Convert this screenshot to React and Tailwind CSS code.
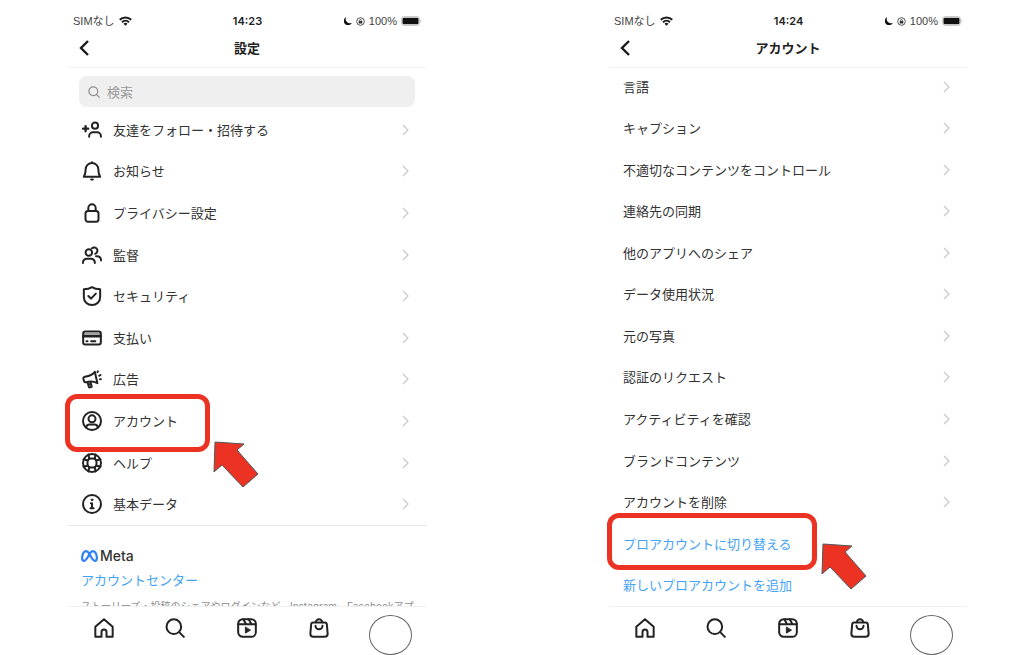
const settings = [
  { label: "友達をフォロー・招待する", icon: AddUserIcon },
  { label: "お知らせ", icon: BellIcon },
  { label: "プライバシー設定", icon: LockIcon },
  { label: "監督", icon: UsersIcon },
  { label: "セキュリティ", icon: ShieldIcon },
  { label: "支払い", icon: CardIcon },
  { label: "広告", icon: MegaphoneIcon },
  { label: "アカウント", icon: UserCircleIcon, marked: true },
  { label: "ヘルプ", icon: LifebuoyIcon },
  { label: "基本データ", icon: InfoIcon },
];

const accountItems = [
  { label: "言語" },
  { label: "キャプション" },
  { label: "不適切なコンテンツをコントロール" },
  { label: "連絡先の同期" },
  { label: "他のアプリへのシェア" },
  { label: "データ使用状況" },
  { label: "元の写真" },
  { label: "認証のリクエスト" },
  { label: "アクティビティを確認" },
  { label: "ブランドコンテンツ" },
  { label: "アカウントを削除" },
  { label: "プロアカウントに切り替える", link: true, marked: true },
  { label: "新しいプロアカウントを追加", link: true },
];

// shared wrapper for the line icons
function Icon({ children, className = "size-5" }) {
  return (
    <svg
      viewBox="0 0 24 24"
      fill="none"
      stroke="currentColor"
      strokeWidth="2.4"
      strokeLinecap="round"
      strokeLinejoin="round"
      className={`shrink-0 ${className}`}
      aria-hidden="true"
    >
      {children}
    </svg>
  );
}

function AddUserIcon() {
  return (
    <Icon>
      <path d="M1.2 10.4h6.200M4.300 7.300v6.200" strokeWidth="2.800" />
      <circle cx="15.600" cy="6.800" r="3.700" />
      <path d="M8.600 20v-.6a4.600 4.600 0 0 1 4.600-4.600h4.900a4.600 4.600 0 0 1 4.600 4.600v.6" />
    </Icon>
  );
}

function BellIcon() {
  return (
    <Icon>
      <path d="M12 2.400a7.600 7.600 0 0 0-7.600 7.600c0 4-.3 6-2.200 9h19.600c-1.900-3-2.200-5-2.200-9A7.600 7.600 0 0 0 12 2.400z" />
      <path d="M11 22.200h2M12 1.400v1" />
    </Icon>
  );
}

function LockIcon() {
  return (
    <Icon>
      <rect x="4.200" y="9.600" width="15.600" height="13" rx="3" />
      <path d="M7.600 9.600V6a4.400 4.400 0 0 1 8.800 0v3.600" />
    </Icon>
  );
}

function UsersIcon() {
  return (
    <Icon>
      <circle cx="8.200" cy="9" r="3.900" />
      <path d="M1.200 21.600V21a4.600 4.600 0 0 1 4.600-4.600h5a4.600 4.600 0 0 1 4.600 4.600v.6" />
      <path d="M12 4a3.900 3.900 0 1 1 3.800 6.600" />
      <path d="M16.800 13.400h1.400a4.600 4.600 0 0 1 4.600 4.600v.6" />
    </Icon>
  );
}

function ShieldIcon() {
  return (
    <Icon>
      <path d="M12 1.400c3 2 6 2.600 9.800 2.600v9.200c0 5.400-4.200 9.600-9.800 9.600s-9.800-4.200-9.800-9.600V4C6 4 9 3.400 12 1.400z" />
      <path d="M7.600 12l3.200 3.200 5.800-6" />
    </Icon>
  );
}

function CardIcon() {
  return (
    <Icon>
      <rect x="1.400" y="4.200" width="21.200" height="15.600" rx="2.600" />
      <path d="M1.400 10h21.200" strokeWidth="3" />
      <path d="M1.400 7.200h21.200" strokeWidth="1" />
      <path d="M5.400 15.800h1.200M11 15.800h5" />
    </Icon>
  );
}

function MegaphoneIcon() {
  return (
    <Icon>
      <path d="M15.400 3.400C12.400 7.600 8 8.400 3.200 9.400a2 2 0 0 0-1.500 2.500l.8 2.700a2 2 0 0 0 2.400 1.300c4.600-1.200 9-1.200 13.600 1.100z" />
      <path d="M6.600 16l1.600 5.400a1 1 0 0 0 1.300.7l2.200-.7-1.500-5.400M8.400 18.600l2-.6" />
      <path d="M18.600 3.800l.5-1M20.800 8l1.400-.8M21.600 12.200l1 .2" />
    </Icon>
  );
}

function UserCircleIcon() {
  return (
    <Icon>
      <circle cx="12" cy="12" r="10.800" />
      <circle cx="12" cy="9.400" r="4.200" />
      <path d="M5 19.800v-.2a4 4 0 0 1 4-3.400h6a4 4 0 0 1 4 3.400v.2" />
    </Icon>
  );
}

function LifebuoyIcon() {
  return (
    <Icon>
      <circle cx="12" cy="12" r="10.800" />
      <rect x="6.600" y="6.600" width="10.800" height="10.800" rx="4.200" />
      <path d="M7.800 1.800L8.600 7M16.200 1.800L15.400 7M7.800 22.200L8.600 17M16.200 22.200L15.400 17M1.800 7.800L7 8.600M1.800 16.200L7 15.400M22.200 7.800L17 8.600M22.200 16.200L17 15.400" />
    </Icon>
  );
}

function InfoIcon() {
  return (
    <Icon>
      <circle cx="12" cy="12" r="10.800" />
      <circle cx="12" cy="7" r="1.100" fill="currentColor" strokeWidth="1" />
      <path d="M10.600 11H12v6M10.200 17.200h3.800" />
    </Icon>
  );
}

function HomeIcon() {
  return (
    <Icon>
      <path d="M9 22.400v-5.600a3 3 0 0 1 6 0v5.600h7.400V10.600L12 1.600l-10.400 9v11.800z" />
    </Icon>
  );
}

function SearchIcon({ className }) {
  return (
    <Icon className={className}>
      <circle cx="10.600" cy="10.400" r="8.800" />
      <path d="M17 17l5.600 5.600" />
    </Icon>
  );
}

function ReelsIcon() {
  return (
    <Icon>
      <rect x="1.400" y="1.400" width="21.200" height="21.200" rx="5.600" />
      <path d="M1.600 7.400h20.800M7.600 1.600l3.200 5.600M14 1.600l3.200 5.600" />
      <path d="M10 11.200v7l6-3.500z" fill="currentColor" strokeWidth="1" />
    </Icon>
  );
}

function ShopIcon() {
  return (
    <Icon>
      <path d="M5 5.400h14a2.400 2.400 0 0 1 2.400 2.100l1 11.500a3.600 3.600 0 0 1-3.600 3.600H5.200A3.600 3.600 0 0 1 1.600 19l1-11.500A2.400 2.400 0 0 1 5 5.400z" />
      <path d="M8.200 5.200a3.800 3.800 0 0 1 7.600 0M7.800 9.400a4.200 4.200 0 0 0 8.400 0" />
    </Icon>
  );
}

function Chevron() {
  return (
    <svg viewBox="0 0 7 12" className="h-3 w-[7px] shrink-0 text-[#c8c8c8]" fill="none" stroke="currentColor" aria-hidden="true">
      <path d="M1 1l5 5-5 5" strokeWidth="1.2" />
    </svg>
  );
}

function MetaLogo() {
  return (
    <svg viewBox="0 0 34 24" className="h-3 w-[17px]" fill="none" stroke="#2f80f5" strokeWidth="4.4" strokeLinejoin="round" aria-hidden="true">
      <path d="M17 8C14.500 4 12.500 2.200 9.800 2.200 5.500 2.200 2.200 9 2.200 16c0 3.600 1.200 5.800 3.800 5.800 3.600 0 6-4 11-13.800 2.500-4 4.500-5.800 7.200-5.800 4.300 0 7.600 6.800 7.600 13.800 0 3.600-1.200 5.800-3.800 5.800-3.600 0-6-4-11-13.800z" />
    </svg>
  );
}

function Arrow({ className }) {
  return (
    <svg viewBox="0 0 46 48" className={`pointer-events-none absolute z-10 h-12 w-[46px] ${className}`} aria-hidden="true">
      <path d="M2 2l29 2-7 6 21 24-15 13L9 25l-8 7z" fill="#ec3323" stroke="#4b5a5c" strokeWidth="1" />
    </svg>
  );
}

function StatusBar({ time }) {
  return (
    <div className="grid h-8 grid-cols-3 items-center pt-2.5 pr-1 pl-[5px] text-[11px] leading-4 text-[#444]">
      <div className="flex items-center gap-1 font-['Liberation_Sans','Noto_Sans_CJK_JP',sans-serif]">
        <span>SIMなし</span>
        <svg viewBox="0 0 26 20" className="h-2.5 w-[13px]" fill="none" stroke="#1a1a1a" strokeWidth="4" aria-hidden="true">
          <path d="M1.500 7.500a16.500 16.500 0 0 1 23 0M6 12.500a10 10 0 0 1 14 0" />
          <path d="M13 19.500l-4-4a5.600 5.600 0 0 1 8 0z" fill="#1a1a1a" stroke="none" />
        </svg>
      </div>
      <span className="text-center font-semibold text-[#222]">{time}</span>
      <div className="flex items-center justify-end gap-1">
        <svg viewBox="0 0 16 16" className="size-2" fill="#111" aria-hidden="true">
          <path d="M4.500 0a8.500 8.500 0 0 0 11.500 11.500A8.600 8.600 0 1 1 4.500 0z" />
        </svg>
        <svg viewBox="0 0 20 20" className="size-[9px]" fill="none" stroke="#444" strokeWidth="2" aria-hidden="true">
          <circle cx="10" cy="10" r="8.500" />
          <rect x="6" y="9" width="8" height="5.500" fill="#333" stroke="none" />
          <path d="M8 9V7.500a2 2 0 0 1 4 0V9" />
        </svg>
        <span className="font-['Liberation_Sans',sans-serif]">100%</span>
        <svg viewBox="0 0 42 20" className="h-2.5 w-[21px]" aria-hidden="true">
          <rect x="1" y="1" width="36" height="18" rx="5" fill="none" stroke="#bbb" strokeWidth="1.500" />
          <rect x="3" y="3.500" width="32" height="13" rx="2.500" fill="#111" />
          <path d="M39 7v6c2-.5 2-5.500 0-6z" fill="#aaa" />
        </svg>
      </div>
    </div>
  );
}

function Header({ time, title }) {
  return (
    <header className="shrink-0 border-b border-[#f0f0f0] pb-[3px]">
      <StatusBar time={time} />
      <div className="grid h-8 grid-cols-3 items-center px-[11px]">
        <button type="button" aria-label="戻る" className="justify-self-start text-[#1a1a1a]">
          <svg viewBox="0 0 10 16" className="h-4 w-2.5" fill="none" stroke="currentColor" strokeWidth="2.400" aria-hidden="true">
            <path d="M9 1L2 8l7 7" />
          </svg>
        </button>
        <h1 className="text-center text-[13px] leading-5 font-bold whitespace-nowrap text-[#222]">{title}</h1>
      </div>
    </header>
  );
}

function TabBar() {
  const tabs = [
    { name: "ホーム", icon: HomeIcon },
    { name: "検索", icon: SearchIcon },
    { name: "リール", icon: ReelsIcon },
    { name: "ショップ", icon: ShopIcon },
  ];
  return (
    <nav className="grid shrink-0 grid-cols-5 border-t border-[#f0f0f0] bg-white pt-2 text-[#222]">
      {tabs.map((tab) => (
        <button key={tab.name} type="button" aria-label={tab.name} className="flex justify-center pt-[3px]">
          <tab.icon />
        </button>
      ))}
      <button type="button" aria-label="プロフィール" className="h-10 w-[43px] justify-self-center rounded-[50%] border border-[#666]" />
    </nav>
  );
}

function App() {
  return (
    <div className="flex h-screen gap-[183px] overflow-hidden bg-white pr-[57px] pl-[68px] font-['Inter','Noto_Sans_CJK_JP',sans-serif] text-[#333]">
      {/* settings */}
      <section className="flex min-w-0 flex-1 flex-col">
        <Header time="14:23" title="設定" />
        <label className="mx-[11px] mt-2 mb-0.5 flex h-[31px] shrink-0 items-center gap-[7px] rounded-lg bg-[#efefef] px-[9px] text-[#8e8e8e]">
          <SearchIcon className="size-3" />
          <input
            type="search"
            aria-label="検索"
            placeholder="検索"
            className="min-w-0 flex-1 bg-transparent text-[13px] leading-5 outline-none placeholder:text-[#999]"
          />
        </label>
        <ul className="flex flex-1 flex-col">
          {settings.map((item) => (
            <li key={item.label} className="relative flex flex-1">
              <button type="button" className="flex flex-1 items-center gap-[11px] pr-[17px] pl-3.5 text-left text-[13px] leading-5">
                <span className="text-[#222]">
                  <item.icon />
                </span>
                <span className="flex-1">{item.label}</span>
                <Chevron />
              </button>
              {item.marked && (
                <>
                  <div className="pointer-events-none absolute -top-1.5 -bottom-2.5 -left-[3px] w-[145px] rounded-xl border-5 border-[#ec3323]" />
                  <Arrow className="top-10 left-[145px]" />
                </>
              )}
            </li>
          ))}
        </ul>
        <div className="h-[81px] shrink-0 overflow-hidden border-t border-[#e6e6e6] px-[13px] pt-5">
          <div className="flex items-center gap-0.5 text-sm leading-5 font-medium">
            <MetaLogo />
            <span>Meta</span>
          </div>
          <a href="#" className="mt-1 block text-[13px] leading-5 text-[#45a3f5]">
            アカウントセンター
          </a>
          <p className="mt-2 text-[10px] leading-4 whitespace-nowrap text-[#8e8e8e]">
            ストーリーズ・投稿のシェアやログインなど、Instagram、Facebookアプ
          </p>
        </div>
        <TabBar />
      </section>

      {/* account */}
      <section className="flex min-w-0 flex-1 flex-col">
        <Header time="14:24" title="アカウント" />
        <ul className="-mt-0.5 flex flex-1 flex-col">
          {accountItems.map((item) => (
            <li key={item.label} className="relative flex flex-1">
              {item.link ? (
                <a href="#" className="flex flex-1 items-center px-3.5 text-[13px] leading-5 text-[#45a3f5]">
                  {item.label}
                </a>
              ) : (
                <button type="button" className="flex flex-1 items-center justify-between pr-[17px] pl-3.5 text-left text-[13px] leading-5">
                  <span>{item.label}</span>
                  <Chevron />
                </button>
              )}
              {item.marked && (
                <>
                  <div className="pointer-events-none absolute -top-2.5 -bottom-1.5 -left-0.5 w-[210px] rounded-xl border-5 border-[#ec3323]" />
                  <Arrow className="top-[19px] left-[212px]" />
                </>
              )}
            </li>
          ))}
        </ul>
        <TabBar />
      </section>
    </div>
  );
}

export default App;
